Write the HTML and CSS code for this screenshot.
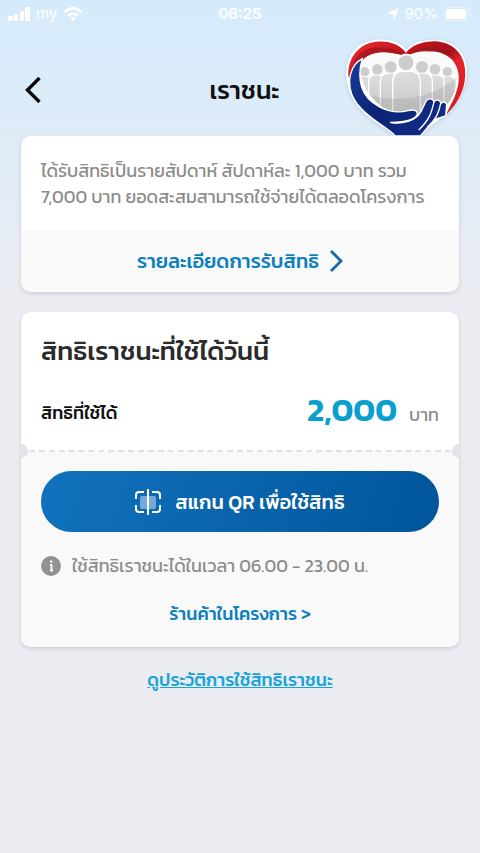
FILE: index.html
```html
<!DOCTYPE html>
<html lang="th">
<head>
  <meta charset="UTF-8">
  <meta name="viewport" content="width=device-width, initial-scale=1.0">
  <title>เราชนะ</title>
  <link rel="stylesheet" href="styles.css">
</head>
<body>
  <div class="statusbar">
    <div class="status-left">
      <svg width="22" height="14" viewBox="0 0 22 14" fill="#fff"><rect x="0" y="9" width="5" height="5" rx="1"/><rect x="6" y="7" width="4" height="7" rx="1"/><rect x="12" y="4" width="4" height="10" rx="1"/><rect x="17" y="0" width="5" height="14" rx="1"/></svg>
      <span>my</span>
      <svg width="20" height="14" viewBox="0 0 20 14" fill="none" stroke="#fff" stroke-width="2.6"><path d="M1.5 5.2Q10-2.4 18.5 5.2M5 8.8Q10 4.4 15 8.8"/><path d="M7 10.8Q10 8.6 13 10.8L10 14Z" fill="#fff" stroke="none"/></svg>
    </div>
    <span class="time">06:25</span>
    <div class="status-right">
      <svg width="12" height="12" viewBox="0 0 12 12" fill="#fff"><path d="M12 0 7 12 6 6 0 5Z"/></svg>
      <span>90%</span>
      <svg width="28" height="14" viewBox="0 0 28 14"><rect x=".5" y=".5" width="24" height="13" rx="3.5" fill="none" stroke="#fff" stroke-opacity=".4"/><rect x="2" y="2" width="20" height="10" rx="2" fill="#fff"/><path d="M26 5q2 2 0 4z" fill="#fff" fill-opacity=".5"/></svg>
    </div>
  </div>

  <header class="header">
    <button class="back" type="button" aria-label="ย้อนกลับ">
      <svg width="18" height="28" viewBox="0 0 18 28" fill="none" stroke="#0b0b0b" stroke-width="3.4"><path d="M15.5 2 3.5 14 15.5 26"/></svg>
    </button>
    <h1>เราชนะ</h1>
    <svg class="logo" width="124" height="98" viewBox="30 24 372 294">
      <defs>
        <linearGradient id="red" x1="0" y1="0" x2="1" y2="1"><stop offset="0" stop-color="#f02a30"/><stop offset=".3" stop-color="#c4141c"/><stop offset=".5" stop-color="#a5131a"/><stop offset=".6" stop-color="#e5252b"/><stop offset="1" stop-color="#d3161d"/></linearGradient>
        <linearGradient id="navy" x1="0" y1="0" x2="1" y2="1"><stop offset="0" stop-color="#173f9a"/><stop offset=".5" stop-color="#0b2377"/><stop offset="1" stop-color="#142f8c"/></linearGradient>
        <linearGradient id="grey" x1="0" y1="0" x2="0" y2="1"><stop offset="0" stop-color="#dedede"/><stop offset="1" stop-color="#c4c4c4"/></linearGradient>
        <clipPath id="inner"><path d="M76 100C95 66 150 58 190 76L213 84L240 76C285 54 350 76 366 125C374 185 335 225 316 250L215 262C145 248 72 190 76 100Z"/></clipPath>
      </defs>
      <path d="M213 59C190 28 145 24 106 32C60 42 32 82 34 137C36 205 83 251 137 286C161 302 183 315 207 337L227 337C251 311 286 291 322 261C364 225 398 174 396 118C394 66 355 29 300 29C262 28 231 39 213 59Z" fill="#fff"/>
      <path d="M213 68C187 36 145 30 108 38C66 49 38 87 40 137L54 165C55 120 77 89 111 78C145 63 189 69 213 79C253 53 322 57 352 90C386 132 371 184 340 239Q335 250 333 254C373 217 395 168 390 118C386 68 350 36 300 34C261 34 231 46 213 68Z" fill="url(#red)"/>
      <path d="M60 88Q86 51 130 52Q177 51 213 77Q244 48 303 51Q342 58 361 84Q323 61 283 65Q240 63 213 79Q166 61 111 75Q75 90 58 122Z" fill="#98151b" opacity=".65"/>
      <path d="M76 100C95 66 150 58 190 76L213 84L240 76C285 54 350 76 366 125C374 185 335 225 316 250L215 262C145 248 72 190 76 100Z" fill="#fafafa"/>
      <g clip-path="url(#inner)" fill="url(#grey)" stroke="#fff" stroke-width="4">
        <rect x="68" y="139" width="42" height="125" rx="15"/>
        <rect x="318" y="138" width="42" height="125" rx="15"/>
        <rect x="101" y="134" width="48" height="130" rx="19"/>
        <rect x="279" y="134" width="48" height="130" rx="19"/>
        <rect x="136" y="129" width="60" height="140" rx="23"/>
        <rect x="232" y="129" width="60" height="140" rx="23"/>
        <path d="M173 264V154Q174 123 207 123H221Q257 124 256 158V264Z"/>
        <path d="M86 193Q251 236 363 144V248H113Z" fill="#999" opacity=".3" stroke="none"/>
      </g>
      <g fill="#cdcdcd" stroke="#fff" stroke-width="2">
        <circle cx="89" cy="125" r="15"/><circle cx="127" cy="118" r="17"/><circle cx="167" cy="111" r="19"/><circle cx="261" cy="111" r="19"/><circle cx="300" cy="118" r="17"/><circle cx="337" cy="125" r="15"/><circle cx="213" cy="98" r="25" stroke-width="5"/>
      </g>
      <path d="M82 86C46 105 36 150 50 192C68 242 131 277 168 305L181 318H256L279 291L302 267L332 258L335 222Q327 211 318 221L314 213Q306 207 297 215Q292 203 278 208C266 219 267 238 249 257C230 275 193 284 165 277C205 276 246 269 247 249Q243 236 219 242C161 257 95 220 80 171Q68 132 82 86Z" fill="url(#navy)" stroke="#fff" stroke-width="4"/>
      <path d="M297 215C291 242 286 267 251 300M317 221C311 250 303 268 277 292" fill="none" stroke="#fff" stroke-width="4"/>
    </svg>
  </header>

  <main>
    <section class="card">
      <p class="info">ได้รับสิทธิเป็นรายสัปดาห์ สัปดาห์ละ 1,000 บาท รวม 7,000 บาท ยอดสะสมสามารถใช้จ่ายได้ตลอดโครงการ</p>
      <a class="detail" href="#">รายละเอียดการรับสิทธิ
        <svg width="14" height="24" viewBox="0 0 14 24" fill="none" stroke="#1268ad" stroke-width="2.8"><path d="M2 2 12 12 2 22"/></svg>
      </a>
    </section>

    <section class="card ticket">
      <div class="ticket-top">
        <h2>สิทธิเราชนะที่ใช้ได้วันนี้</h2>
        <div class="balance">
          <span class="label">สิทธิที่ใช้ได้</span>
          <span class="amount"><strong>2,000</strong><span class="unit">บาท</span></span>
        </div>
      </div>
      <div class="tear"></div>
      <div class="ticket-bottom">
        <button class="scan" type="button">
          <svg width="26" height="26" viewBox="0 0 26 26" fill="none" stroke="#fff" stroke-width="2"><rect x="5" y="7" width="16" height="13" rx="2" fill="#75a9db" stroke="none"/><path d="M9 3H4Q1 3 1 6V10M1 16V20Q1 23 4 23H9M17 3H22Q25 3 25 6V10M25 16V20Q25 23 22 23H17M13 0V26"/></svg>
          สแกน QR เพื่อใช้สิทธิ
        </button>
        <p class="hours">
          <svg width="20" height="20" viewBox="0 0 20 20"><circle cx="10" cy="10" r="10" fill="#929292"/><path d="M9 5.5h2.4M9 9H10.500V14.5M9 14.5h3" fill="none" stroke="#fff" stroke-width="1.8"/></svg>
          ใช้สิทธิเราชนะได้ในเวลา 06.00 - 23.00 น.
        </p>
        <a class="shops" href="#">ร้านค้าในโครงการ &gt;</a>
      </div>
    </section>

    <a class="history" href="#">ดูประวัติการใช้สิทธิเราชนะ</a>
  </main>
</body>
</html>
```

FILE: styles.css
```css
* {
  box-sizing: border-box;
}
body {
  margin: 0;
  min-height: 100vh;
  font-family: Kanit, "Noto Sans Thai", "Noto Sans", sans-serif;
  font-size: 18px;
  line-height: 26px;
  color: #8c8c8c;
  background: #ebecf1 linear-gradient(#d5ebfc, #ebecf1 310px) no-repeat;
}
h1, h2, p {
  margin: 0;
}
a {
  color: #0d80bd;
  font-weight: 500;
  text-decoration: none;
}
button {
  border: 0;
  font: inherit;
}
svg {
  display: block;
  flex-shrink: 0;
}
.statusbar {
  display: grid;
  grid-template-columns: 1fr auto 1fr;
  align-items: center;
  height: 28px;
  padding: 0 8px;
  font-family: Inter, sans-serif;
  font-size: 15px;
  color: #fff;
}
.status-left, .status-right {
  display: flex;
  align-items: center;
  gap: 6px;
}
.status-right {
  justify-content: flex-end;
}
.time {
  font-weight: 600;
}
.header {
  display: grid;
  grid-template-columns: 1fr auto 1fr;
  align-items: center;
  height: 108px;
  padding: 10px 11px 0 20px;
}
.back {
  justify-self: start;
  margin-top: 6px;
  padding: 4px;
  background: none;
}
h1 {
  margin-top: 6px;
  font-size: 25px;
  line-height: 32px;
  font-weight: 500;
  color: #111;
}
.logo {
  justify-self: end;
  filter: drop-shadow(0 1px 2px #8aa0b866);
}
main {
  display: flex;
  flex-direction: column;
  gap: 20px;
  padding: 0 21px 40px;
}
.card {
  border-radius: 10px;
  background: #fff;
  box-shadow: 0 2px 4px #0000001f;
  overflow: hidden;
  position: relative;
}
.info {
  padding: 22px 20px 20px;
}
.detail {
  display: flex;
  align-items: center;
  justify-content: center;
  gap: 10px;
  height: 62px;
  font-size: 20px;
  background: #f9f9f9;
}
.ticket-top {
  height: 138px;
  padding: 20px 20px 0;
}
h2 {
  font-size: 26px;
  line-height: 38px;
  font-weight: 500;
  color: #2b2b2b;
}
.balance {
  display: flex;
  align-items: center;
  justify-content: space-between;
  margin-top: 16px;
}
.label {
  font-weight: 500;
  color: #111;
}
.amount {
  display: flex;
  align-items: baseline;
  gap: 12px;
  line-height: 48px;
}
.amount strong {
  font-size: 33px;
  font-weight: 600;
  color: #099fce;
}
/* dashed tear line with a notch on each side */
.tear {
  border-top: 2px dashed #e1e2e8;
  margin: 0 8px;
}
.tear::before, .tear::after {
  content: "";
  position: absolute;
  top: 132px;
  width: 14px;
  height: 14px;
  border-radius: 50%;
  background: #e4e5ec;
}
.tear::before {
  left: -7px;
}
.tear::after {
  right: -7px;
}
.ticket-bottom {
  display: flex;
  flex-direction: column;
  padding: 19px 20px 20px;
  background: #f9f9f9;
}
.scan {
  display: flex;
  align-items: center;
  justify-content: center;
  gap: 14px;
  height: 61px;
  border-radius: 31px;
  font-size: 20px;
  font-weight: 500;
  color: #fff;
  background: linear-gradient(110deg, #1272bd, #00559b);
}
.hours {
  display: flex;
  align-items: center;
  gap: 11px;
  margin-top: 21px;
}
.shops {
  align-self: center;
  margin-top: 22px;
}
.history {
  align-self: center;
  color: #18a4d6;
  text-decoration: underline;
}
```
